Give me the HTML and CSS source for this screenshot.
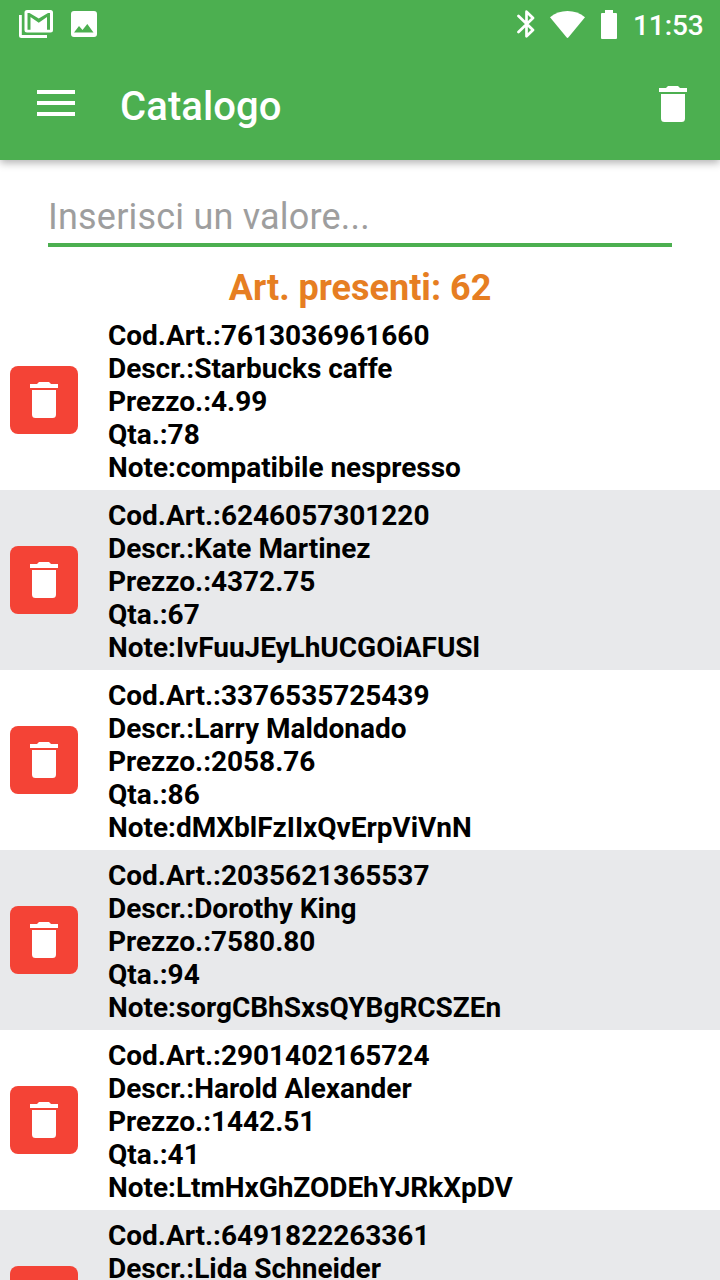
FILE: index.html
```
<!DOCTYPE html>
<html lang="it">
<head>
    <meta charset="UTF-8">
    <meta name="viewport" content="width=device-width, initial-scale=1.0">
    <title>Catalogo</title>
    <link rel="stylesheet" href="styles.css">
</head>
<body>

    <svg class="sprite" width="0" height="0">
        <symbol id="trash" viewBox="0 0 28 36">
            <path d="M0 2H7L9 0H19L21 2H28V6H0ZM2 8H26V32.500Q26 36 22.500 36H5.500Q2 36 2 32.500Z"/>
        </symbol>
    </svg>

    <header>
        <div class="status">
            <svg class="gmail" width="34" height="28" viewBox="0 0 34 28">
                <path fill-rule="evenodd" d="M8 0H31.500Q34 0 34 2.500V20Q34 22.500 31.500 22.500H8Q5.500 22.500 5.500 20V2.500Q5.500 0 8 0ZM8.500 19.700H11.500V7L19.750 12.700L28 7V19.700H31V3H29L19.750 8.500L10.500 3H8.500Z"/>
                <path d="M0 5H2.800V25H28V28H2.500Q0 28 0 25.500Z"/>
            </svg>
            <svg class="photo" width="26" height="26" viewBox="0 0 26 26">
                <path fill-rule="evenodd" d="M3 0H23Q26 0 26 3V23Q26 26 23 26H3Q0 26 0 23V3Q0 0 3 0ZM3 21.500H22.500L16.300 13L11.500 19L8 15Z"/>
            </svg>
            <svg class="bluetooth" width="18" height="28" viewBox="0 0 18 28">
                <path d="M1.500 6L16 20L9.500 26.300V1.700L16 8L1.500 22" fill="none" stroke="#fff" stroke-width="2.700" stroke-linecap="round" stroke-linejoin="round"/>
            </svg>
            <svg class="wifi" width="35" height="27" viewBox="0 0 35 27">
                <path d="M0 6.200Q7.500 0 17.500 0T35 6.200L18.500 26.300Q17.500 27.500 16.500 26.300Z"/>
            </svg>
            <svg class="battery" width="16" height="29" viewBox="0 0 16 29">
                <path d="M4 0H12V3H15Q16 3 16 4V28Q16 29 15 29H1Q0 29 0 28V4Q0 3 1 3H4Z"/>
            </svg>
            <span class="time">11:53</span>
        </div>

        <div class="toolbar">
            <svg class="menu" width="38" height="26" viewBox="0 0 38 26">
                <path d="M0 0H38V4H0ZM0 11H38V15H0ZM0 22H38V26H0Z"/>
            </svg>
            <h1>Catalogo</h1>
            <svg class="trash"><use href="#trash"/></svg>
        </div>
    </header>

    <main>
        <div class="search">
            <input type="text" name="search" id="search" placeholder="Inserisci un valore...">
        </div>

        <h2>Art. presenti: 62</h2>

        <div class="item">
            <button type="button" class="delete"><svg class="trash"><use href="#trash"/></svg></button>
            <div class="info">
                <div>Cod.Art.:7613036961660</div>
                <div>Descr.:Starbucks caffe</div>
                <div>Prezzo.:4.99</div>
                <div>Qta.:78</div>
                <div>Note:compatibile nespresso</div>
            </div>
        </div>

        <div class="item">
            <button type="button" class="delete"><svg class="trash"><use href="#trash"/></svg></button>
            <div class="info">
                <div>Cod.Art.:6246057301220</div>
                <div>Descr.:Kate Martinez</div>
                <div>Prezzo.:4372.75</div>
                <div>Qta.:67</div>
                <div>Note:IvFuuJEyLhUCGOiAFUSl</div>
            </div>
        </div>

        <div class="item">
            <button type="button" class="delete"><svg class="trash"><use href="#trash"/></svg></button>
            <div class="info">
                <div>Cod.Art.:3376535725439</div>
                <div>Descr.:Larry Maldonado</div>
                <div>Prezzo.:2058.76</div>
                <div>Qta.:86</div>
                <div>Note:dMXblFzIIxQvErpViVnN</div>
            </div>
        </div>

        <div class="item">
            <button type="button" class="delete"><svg class="trash"><use href="#trash"/></svg></button>
            <div class="info">
                <div>Cod.Art.:2035621365537</div>
                <div>Descr.:Dorothy King</div>
                <div>Prezzo.:7580.80</div>
                <div>Qta.:94</div>
                <div>Note:sorgCBhSxsQYBgRCSZEn</div>
            </div>
        </div>

        <div class="item">
            <button type="button" class="delete"><svg class="trash"><use href="#trash"/></svg></button>
            <div class="info">
                <div>Cod.Art.:2901402165724</div>
                <div>Descr.:Harold Alexander</div>
                <div>Prezzo.:1442.51</div>
                <div>Qta.:41</div>
                <div>Note:LtmHxGhZODEhYJRkXpDV</div>
            </div>
        </div>

        <div class="item">
            <button type="button" class="delete"><svg class="trash"><use href="#trash"/></svg></button>
            <div class="info">
                <div>Cod.Art.:6491822263361</div>
                <div>Descr.:Lida Schneider</div>
            </div>
        </div>
    </main>

</body>
</html>
```

FILE: styles.css
```
*{
    box-sizing: border-box;
}

html{
    overflow: hidden;
}

body{
    margin: 0;
    height: 1280px;
    overflow: hidden;
    background-color: #fff;
    font-family: Roboto, sans-serif;
}

svg{
    display: block;
    flex: none;
    fill: #fff;
}

.sprite{
    position: absolute;
}

.trash{
    width: 28px;
    height: 36px;
}

header{
    height: 160px;
    background-color: #4caf50;
    color: #fff;
    box-shadow: 0 3px 8px rgba(0, 0, 0, 0.3);
}

.status{
    display: flex;
    align-items: center;
    height: 48px;
    padding: 0 16px 0 19px;
}

.photo{
    margin-left: 18px;
}

.bluetooth{
    margin-left: auto;
}

.wifi{
    margin-left: 15px;
}

.battery{
    margin-left: 16px;
}

.time{
    width: 71px;
    margin-left: 16px;
    padding-top: 4px;
    font-size: 28px;
    font-weight: 500;
    line-height: 32px;
    letter-spacing: -0.1px;
}

.toolbar{
    display: flex;
    align-items: center;
    height: 112px;
    padding: 0 33px 0 37px;
}

.menu{
    margin-bottom: 2px;
}

.toolbar h1{
    flex: 1;
    margin: 6px 0 0 45px;
    font-size: 40px;
    font-weight: 500;
    line-height: 48px;
    letter-spacing: 0.1px;
}

.search{
    padding: 30px 48px 0;
}

.search input{
    display: block;
    width: 100%;
    height: 57px;
    padding: 1px 0 0;
    border: none;
    border-bottom: 4px solid #4caf50;
    font-family: inherit;
    font-size: 36px;
    letter-spacing: 0.2px;
}

.search input::placeholder{
    color: #9e9e9e;
}

.search input:focus{
    outline: none;
}

h2{
    height: 63px;
    margin: 0;
    padding-top: 20px;
    color: #e67e22;
    font-size: 36px;
    font-weight: bold;
    line-height: 42px;
    text-align: center;
}

.item{
    display: flex;
    align-items: center;
    height: 180px;
    padding-left: 10px;
}

.item:nth-of-type(odd){
    background-color: #e8e9eb;
}

.delete{
    display: flex;
    align-items: center;
    justify-content: center;
    width: 68px;
    height: 68px;
    padding: 0;
    border: none;
    border-radius: 8px;
    background-color: #f44336;
}

.info{
    height: 164px;
    margin: 2px 0 0 30px;
    font-size: 28px;
    font-weight: bold;
    line-height: 33px;
    letter-spacing: -0.03px;
    color: #000;
}
```
